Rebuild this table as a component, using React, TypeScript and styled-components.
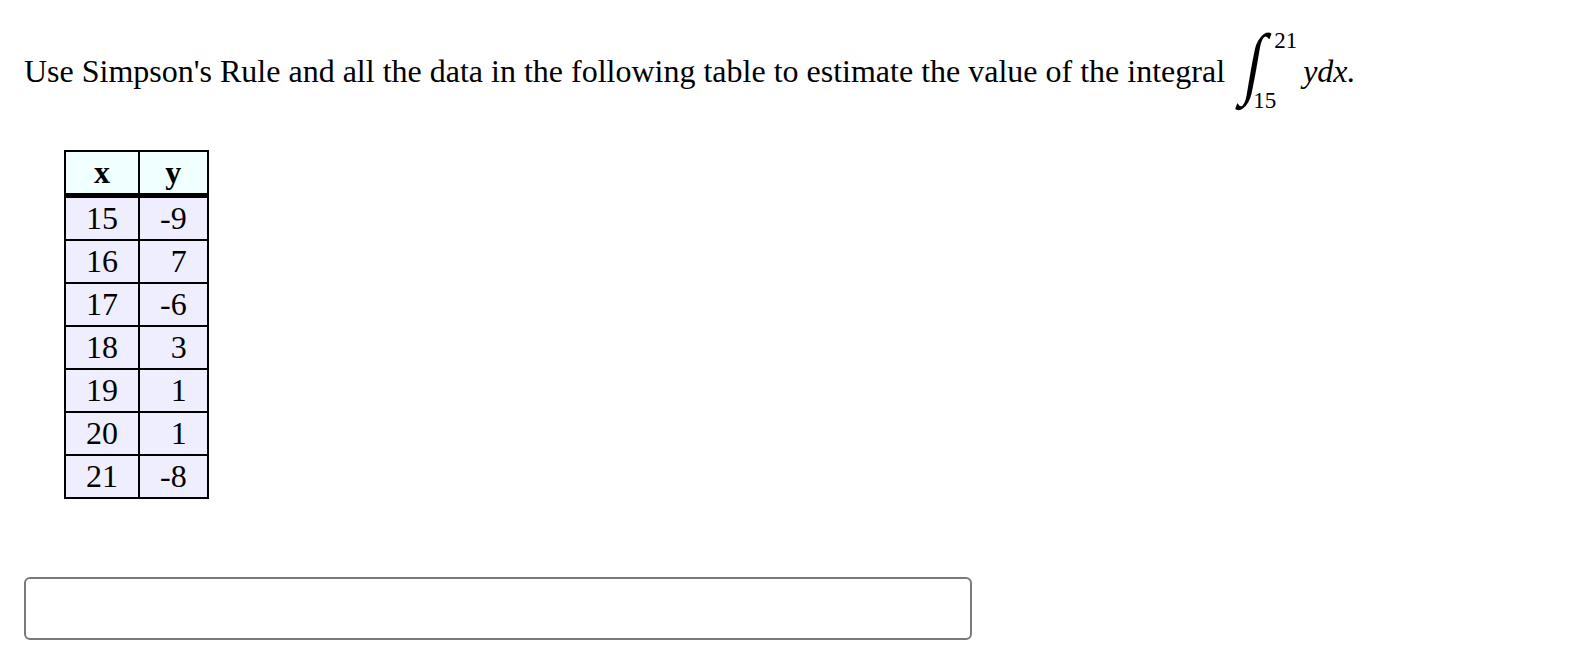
import React from "react";
import styled, { createGlobalStyle } from "styled-components";

const Global = createGlobalStyle`
  html, body { margin: 0; padding: 0; background: #fff; }
  body { font-family: "Liberation Serif", "Times New Roman", serif; color: #000; }
`;

const Page = styled.div`
  padding: 32px 24px 0 24px;
  display: flex;
  flex-direction: column;
  align-items: flex-start;
`;

const Question = styled.div`
  display: flex;
  align-items: center;
  font-size: 32px;
  line-height: 36px;
  white-space: nowrap;
`;

const Integral = styled.span`
  display: inline-flex;
  align-items: stretch;
  height: 78px;
  margin-left: 21px;
`;

const Sign = styled.span`
  font-family: "Liberation Serif", serif;
  font-size: 66px;
  line-height: 78px;
  display: inline-block;
  transform: translateY(-8px) skewX(-10deg) scale(0.92, 1.2);
`;

const Limits = styled.span`
  display: inline-flex;
  flex-direction: column;
  justify-content: space-between;
  font-family: "Liberation Serif", serif;
  font-size: 23px;
  line-height: 18px;
  margin-left: -2px;
`;

const Limit = styled.span<{ $shift: number }>`
  margin-left: ${(p) => p.$shift}px;
`;

const MathVar = styled.span`
  font-style: italic;
  margin-left: 6px;
`;

const DataTable = styled.table`
  margin: 40px 0 0 40px;
  border-collapse: collapse;
  border: 2px solid #000;
  font-size: 32px;
`;

const Head = styled.th`
  background: #f0ffff;
  border: 2px solid #000;
  border-bottom: 5px solid #000;
  padding: 2px 20px;
  font-weight: bold;
  text-align: center;
`;

const Cell = styled.td`
  background: #eeeeff;
  border: 2px solid #000;
  padding: 2px 20px;
  text-align: right;
`;

const Answer = styled.input`
  margin-top: 78px;
  width: 948px;
  height: 63px;
  box-sizing: border-box;
  border: 2px solid #7a7a7a;
  border-radius: 6px;
  background: #fff;
  font-size: 28px;
  padding: 0 12px;
  outline: none;
`;

const rows: [number, number][] = [
  [15, -9],
  [16, 7],
  [17, -6],
  [18, 3],
  [19, 1],
  [20, 1],
  [21, -8],
];

export default function App() {
  return (
    <>
      <Global />
      <Page>
        <Question>
          <span>Use Simpson's Rule and all the data in the following table to estimate the value of the integral</span>
          <Integral>
            <Sign>∫</Sign>
            <Limits>
              <Limit $shift={12}>21</Limit>
              <Limit $shift={-9}>15</Limit>
            </Limits>
          </Integral>
          <MathVar>ydx.</MathVar>
        </Question>
        <DataTable>
          <thead>
            <tr>
              <Head>x</Head>
              <Head>y</Head>
            </tr>
          </thead>
          <tbody>
            {rows.map(([x, y]) => (
              <tr key={x}>
                <Cell>{x}</Cell>
                <Cell>{y}</Cell>
              </tr>
            ))}
          </tbody>
        </DataTable>
        <Answer type="text" />
      </Page>
    </>
  );
}
